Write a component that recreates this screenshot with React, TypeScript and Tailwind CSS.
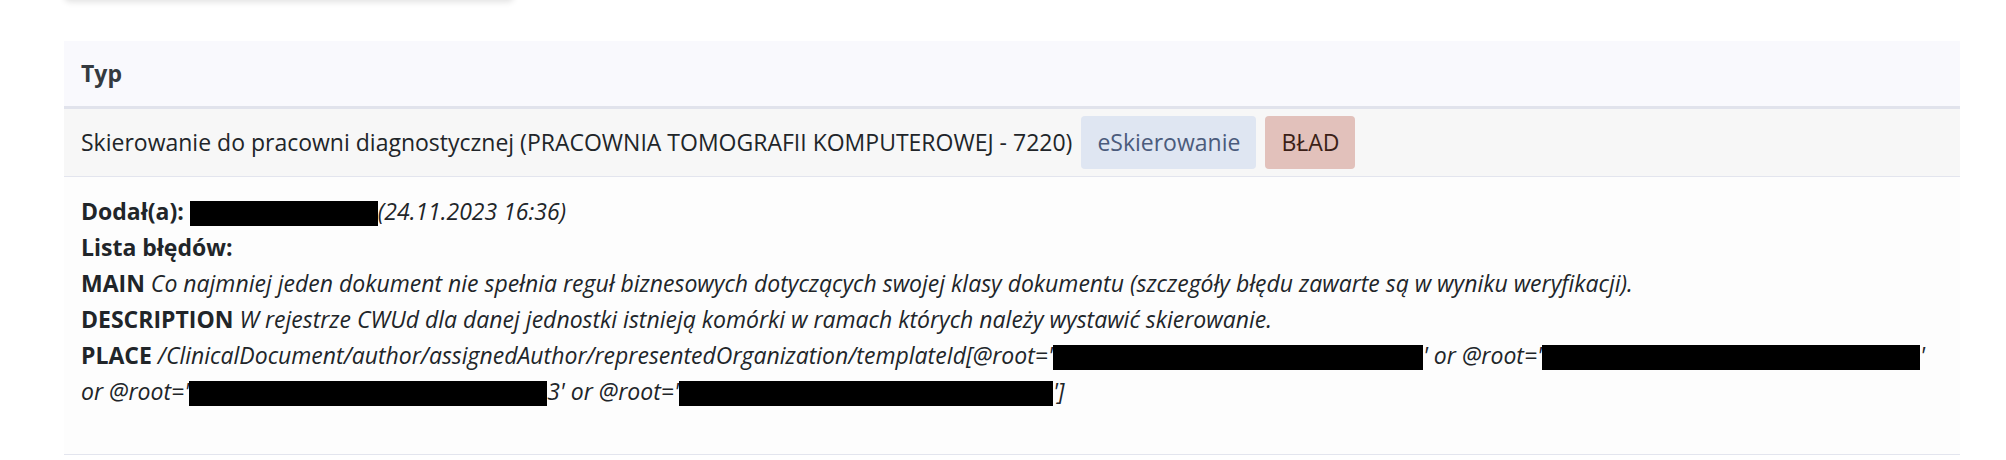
import React from 'react';

function Redacted({ w }: { w: string }) {
  return <span className={`inline-block h-[25px] align-[-6px] bg-black ${w}`} />;
}

export default function App() {
  return (
    <div className="flex min-h-[460px] flex-col bg-white font-['Open_Sans',sans-serif] text-[23px] text-[#212529]">
      <div className="-mt-[24px] ml-[64px] h-[24px] w-[450px] rounded-b-md bg-white shadow-[0_2px_6px_rgba(0,0,0,0.12)]" />

      <table className="mt-[41px] ml-[64px] mr-[46px] border-collapse">
        <thead>
          <tr className="bg-[#f9f9fd]">
            <th className="border-b-[3px] border-[#e1e3ec] px-[17px] py-[16px] text-left font-bold leading-[33px] text-[#343a40]">
              Typ
            </th>
          </tr>
        </thead>
        <tbody>
          <tr className="bg-[#f7f7f7]">
            <td className="border-b border-[#e3e5ee] px-[17px] py-[7px]">
              <div className="flex items-center gap-[9px] leading-[33px]">
                <span>Skierowanie do pracowni diagnostycznej (PRACOWNIA TOMOGRAFII KOMPUTEROWEJ - 7220)</span>
                <span className="rounded-[4px] bg-[#dfe6f2] px-[16px] py-[10px] text-[#4b5b7c]">eSkierowanie</span>
                <span className="rounded-[4px] bg-[#e2c1bb] px-[16px] py-[10px] text-[#3b1f17]">BŁAD</span>
              </div>
            </td>
          </tr>
          <tr className="bg-[#fdfdfd]">
            <td className="border-b border-[#e3e5ee] px-[17px] pt-[16px] pb-[45px] leading-[36px]">
              <div>
                <b>Dodał(a):</b> <Redacted w="w-[188px]" />
                <i>(24.11.2023 16:36)</i>
              </div>
              <div>
                <b>Lista błędów:</b>
              </div>
              <div>
                <b>MAIN</b>{' '}
                <i>
                  Co najmniej jeden dokument nie spełnia reguł biznesowych dotyczących swojej klasy dokumentu
                  (szczegóły błędu zawarte są w wyniku weryfikacji).
                </i>
              </div>
              <div>
                <b>DESCRIPTION</b>{' '}
                <i>W rejestrze CWUd dla danej jednostki istnieją komórki w ramach których należy wystawić skierowanie.</i>
              </div>
              <div>
                <b>PLACE</b>{' '}
                <i>
                  /ClinicalDocument/author/assignedAuthor/representedOrganization/templateId[@root='
                  <Redacted w="w-[370px]" />' or @root='<Redacted w="w-[378px]" />' or @root='
                  <Redacted w="w-[358px]" />3' or @root='<Redacted w="w-[374px]" />']
                </i>
              </div>
            </td>
          </tr>
        </tbody>
      </table>
    </div>
  );
}
